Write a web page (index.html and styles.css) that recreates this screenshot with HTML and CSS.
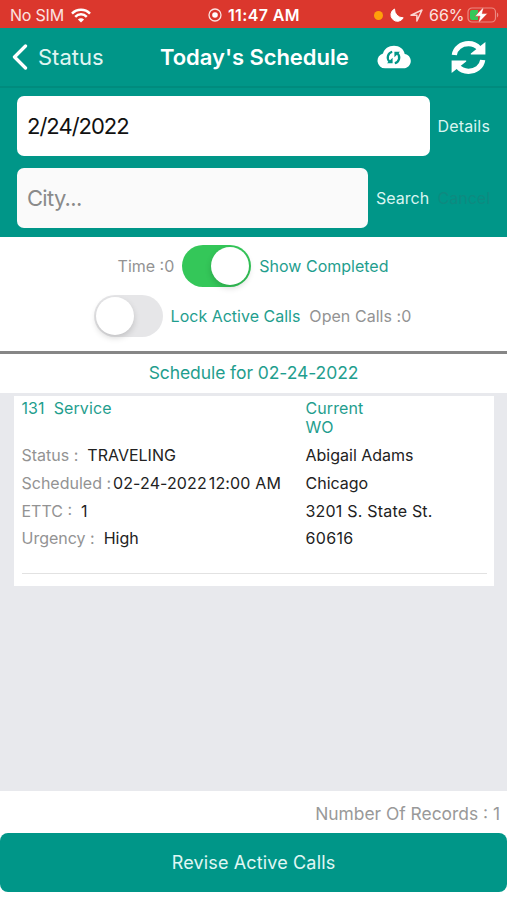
FILE: index.html
```html
<!DOCTYPE html>
<html lang="en">
<head>
    <meta charset="UTF-8">
    <meta name="viewport" content="width=device-width, initial-scale=1.0">
    <title>Today's Schedule</title>
    <link rel="stylesheet" href="styles.css">
</head>
<body>

    <div class="status-bar">
        <div class="carrier">
            <span class="sim">No SIM</span>
            <svg width="20" height="15" viewBox="0 0 20 15" fill="none" stroke="#fff" stroke-width="2.5">
                <path d="M1 5.600C6 .5 14 .5 19 5.600M4.200 8.800c3.300-3.300 8.300-3.300 11.600 0"/>
                <path d="M10 14.600l-3.100-3.100c1.800-1.700 4.400-1.700 6.200 0z" fill="#fff" stroke="none"/>
            </svg>
        </div>
        <div class="clock">
            <svg width="14" height="14" viewBox="0 0 14 14">
                <circle cx="7" cy="7" r="6" fill="none" stroke="#fbe3e1" stroke-width="1.300"/>
                <circle cx="7" cy="7" r="2.800" fill="#fff"/>
            </svg>
            <span class="time">11:47 AM</span>
        </div>
        <div class="indicators">
            <span class="dot"></span>
            <svg class="moon" width="14" height="14" viewBox="0 0 14 14">
                <path d="M4.500 1A6.500 6.500 0 1 0 13.200 9.800 8.500 8.500 0 0 1 4.500 1z" fill="#fff" stroke="#fff" stroke-width="1" stroke-linejoin="round"/>
            </svg>
            <svg class="arrow" width="13" height="13" viewBox="0 0 13 13">
                <path d="M1 6.300L12 1 6.900 12V6.300z" fill="none" stroke="#fbd5d1" stroke-width="1.500" stroke-linejoin="round"/>
            </svg>
            <span class="percent">66%</span>
            <svg class="battery" width="32" height="18" viewBox="0 0 32 18">
                <rect x="1" y="2" width="27.500" height="14" rx="4" fill="none" stroke="#ec8a83" stroke-width="1.200"/>
                <path d="M5 4h6v10H5a2 2 0 0 1-2-2V6a2 2 0 0 1 2-2z" fill="#35c759"/>
                <path d="M30 6.500c1.700.8 1.700 4.200 0 5z" fill="#ec8a83"/>
                <path d="M16.800.8L8 10.200h5l-1.800 7L20.500 7.600h-5.300z" fill="#fff" stroke="#db372d" stroke-width=".5"/>
            </svg>
        </div>
    </div>

    <div class="navbar">
        <a class="back">
            <svg width="16" height="26" viewBox="0 0 16 26">
                <path d="M13.500 2L2.500 13l11 11" fill="none" stroke="#fff" stroke-width="3.300" stroke-linecap="round" stroke-linejoin="round"/>
            </svg>
            <span>Status</span>
        </a>
        <h1>Today's Schedule</h1>
        <svg class="cloud" width="34" height="24" viewBox="0 0 34 24">
            <path d="M8 23.300a7.600 7.600 0 0 1-2-14.900C7.300 3.600 11.600.7 17 .7s9.700 3 10.700 8.200c3.500.4 6.100 3.500 6.100 7.100 0 4-3.200 7.300-7.300 7.300z" fill="#fff"/>
            <g fill="none" stroke="#009688" stroke-width="2.200">
                <path d="M15.200 6.800A5.900 5.900 0 0 0 12.400 16.600"/>
                <path d="M17.800 18.200A5.900 5.900 0 0 0 20.600 8.400"/>
            </g>
            <path d="M10 18.300h5.600v-5.500zM23 6.700h-5.600v5.500z" fill="#009688"/>
        </svg>
        <svg class="sync" width="35" height="35" viewBox="0 0 35 35">
            <g fill="none" stroke="#fff" stroke-width="5.200">
                <path d="M3.300 15C4.300 8 10.400 3.700 17.500 3.700c4.500 0 8.200 1.800 10.900 5"/>
                <path d="M31.700 20c-1 7-7.100 11.300-14.200 11.300-4.500 0-8.200-1.800-10.900-5"/>
            </g>
            <path d="M34.400 1.900v12.700H19.800v-1zM.6 33.100V20.400h14.600v1z" fill="#fff"/>
        </svg>
    </div>

    <form class="search-form">
        <div class="form-row">
            <input type="text" class="date-input" value="2/24/2022">
            <a class="link details">Details</a>
        </div>
        <div class="form-row">
            <input type="text" class="city-input" placeholder="City...">
            <a class="link search">Search</a>
            <a class="link cancel">Cancel</a>
        </div>
    </form>

    <div class="filters">
        <div class="filter-row">
            <span class="muted time-count">Time :0</span>
            <span class="switch on"></span>
            <span class="green show-completed">Show Completed</span>
        </div>
        <div class="filter-row">
            <span class="switch"></span>
            <span class="green lock-calls">Lock Active Calls</span>
            <span class="muted open-calls">Open Calls :0</span>
        </div>
    </div>

    <h2>Schedule for 02-24-2022</h2>

    <div class="list">
        <div class="card">
            <div class="card-head">
                <div class="green"><span class="number">131</span><span class="service">Service</span></div>
                <div class="green">Current<br>WO</div>
            </div>
            <div class="card-row">
                <div><span class="muted">Status :</span><span class="value">TRAVELING</span></div>
                <div>Abigail Adams</div>
            </div>
            <div class="card-row">
                <div><span class="muted">Scheduled :</span><span class="date-value">02-24-2022</span><span class="time-value">12:00 AM</span></div>
                <div>Chicago</div>
            </div>
            <div class="card-row">
                <div><span class="muted">ETTC :</span><span class="value">1</span></div>
                <div class="street">3201 S. State St.</div>
            </div>
            <div class="card-row">
                <div><span class="muted">Urgency :</span><span class="value">High</span></div>
                <div class="zip">60616</div>
            </div>
            <div class="divider"></div>
        </div>
    </div>

    <div class="footer">
        <div class="records">Number Of Records : 1</div>
        <button type="button">Revise Active Calls</button>
    </div>

</body>
</html>
```
FILE: styles.css
```css
* {
    box-sizing: border-box;
}

body {
    margin: 0;
    height: 900px;
    display: flex;
    flex-direction: column;
    background-color: #fff;
    color: #222;
    font-family: Inter, "Liberation Sans", sans-serif;
    font-size: 16px;
    overflow: hidden;
}

svg {
    display: block;
    flex: none;
}

span, a, h1, h2, .records {
    white-space: nowrap;
}

.status-bar {
    height: 28px;
    padding: 2px 8px 0 10px;
    display: grid;
    grid-template-columns: 198px 166px 125px;
    align-items: center;
    background-color: #db372d;
    color: #fbe3e1;
    font-size: 16px;
}

.carrier, .clock, .indicators {
    display: flex;
    align-items: center;
}

.carrier {
    gap: 7px;
}

.sim {
    letter-spacing: -0.2px;
}

.clock {
    gap: 6px;
}

.time {
    font-weight: 600;
    letter-spacing: 0.35px;
    color: #fff;
}

.dot {
    width: 9px;
    height: 9px;
    border-radius: 50%;
    background-color: #ff9f0a;
}

.moon {
    margin-left: 7px;
}

.arrow {
    margin-left: 6px;
}

.percent {
    margin-left: 6px;
    width: 38px;
}

.navbar {
    height: 60px;
    display: flex;
    align-items: center;
    background-color: #009688;
    border-bottom: 2px solid #008b7e;
    color: #fff;
}

.back {
    width: 149px;
    padding-left: 12px;
    display: flex;
    align-items: center;
    gap: 10px;
    font-size: 22px;
    color: #e0f5f2;
}

h1 {
    margin: 0 0 0 11px;
    width: 217px;
    font-size: 22px;
    font-weight: 600;
    letter-spacing: -0.05px;
}

.sync {
    margin-left: 40px;
}

.search-form {
    height: 149px;
    padding: 8px 17px 0;
    background-color: #009688;
}

.form-row {
    display: flex;
    align-items: center;
    margin-bottom: 12px;
}

input {
    height: 60px;
    padding: 0 10px;
    border: none;
    border-radius: 7px;
    font-family: inherit;
    font-size: 22px;
    outline: none;
}

.date-input {
    width: 413px;
    background-color: #fff;
    color: #111;
    letter-spacing: -1px;
}

.city-input {
    width: 351px;
    background-color: #fafafa;
    letter-spacing: -0.7px;
}

.city-input::placeholder {
    color: #8a8a8a;
}

.link {
    margin-left: 8px;
    color: #d9f5f1;
}

.details {
    letter-spacing: 0.15px;
}

.search {
    width: 54px;
}

.cancel {
    color: #0e8a80;
}

.filters {
    height: 117px;
    padding-top: 8px;
    border-bottom: 3px solid #868686;
}

.filter-row {
    height: 42px;
    margin-bottom: 8px;
    padding-right: 1px;
    display: flex;
    align-items: center;
    justify-content: center;
}

.filter-row + .filter-row {
    padding-right: 0;
}

.muted {
    color: #939393;
}

.green {
    color: #1f9e8e;
}

.switch {
    width: 69px;
    height: 42px;
    padding: 2px;
    border-radius: 21px;
    background-color: #e6e6e8;
    display: flex;
}

.switch::before {
    content: "";
    width: 38px;
    height: 38px;
    border-radius: 50%;
    background-color: #fff;
    box-shadow: 0 3px 6px rgba(0, 0, 0, 0.16);
}

.switch.on {
    background-color: #34c759;
    justify-content: flex-end;
}

.time-count, .show-completed, .lock-calls, .open-calls {
    margin: 0 8px;
}

.open-calls {
    margin: 0 2px 0 1px;
    letter-spacing: 0.05px;
}

h2 {
    height: 39px;
    margin: 0;
    font-size: 17.5px;
    font-weight: 400;
    letter-spacing: -0.08px;
    line-height: 38px;
    text-align: center;
    color: #1f9e8e;
}

.list {
    height: 398px;
    padding: 3px 14px 0;
    background-color: #e8e9ed;
}

.card {
    width: 480px;
    height: 190px;
    padding: 3px 7.5px 0;
    background-color: #fff;
}

.card-head, .card-row {
    display: grid;
    grid-template-columns: 284px 1fr;
}

.card-head {
    height: 43px;
    line-height: 19px;
    letter-spacing: 0.1px;
}

.card-row {
    height: 27.8px;
    line-height: 27px;
}

.service {
    margin-left: 9px;
}

.value {
    margin-left: 9px;
}

.date-value {
    margin-left: 2px;
    letter-spacing: 0.1px;
}

.time-value {
    margin-left: 2px;
    letter-spacing: 0.15px;
}

.street {
    letter-spacing: 0.2px;
}

.zip {
    letter-spacing: 0.35px;
}

.divider {
    height: 1px;
    margin-top: 19.5px;
    background-color: #e2e2e2;
}

.footer {
    height: 109px;
}

.records {
    height: 42px;
    padding-right: 7px;
    line-height: 46px;
    font-size: 17.4px;
    text-align: right;
    color: #999;
}

button {
    display: block;
    width: 100%;
    height: 59px;
    border: none;
    border-radius: 8px;
    background-color: #009688;
    color: #e0f7f4;
    font-family: inherit;
    font-size: 18px;
    letter-spacing: 0.15px;
}
```
